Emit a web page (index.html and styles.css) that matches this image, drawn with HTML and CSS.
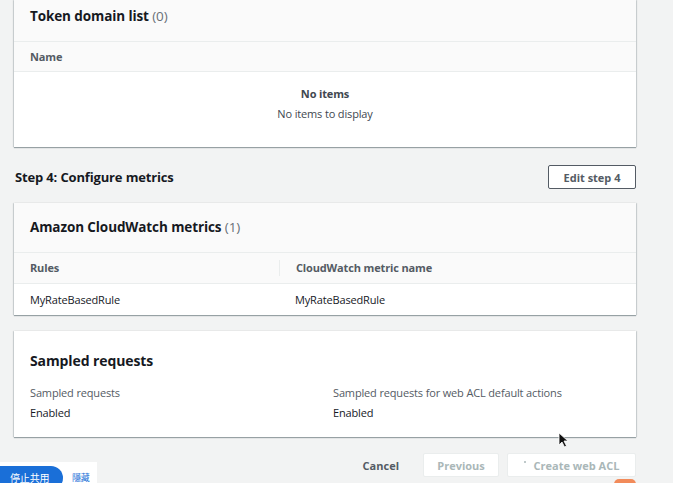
FILE: index.html
```html
<!DOCTYPE html>
<html>
<head>
<meta charset="utf-8">
<link rel="stylesheet" href="styles.css">
</head>
<body>
<main class="page">
  <section class="card card-top">
    <div class="card-header"><h2>Token domain list <span class="count">(0)</span></h2></div>
    <div class="col-head single"><span>Name</span></div>
    <div class="empty">
      <div class="empty-title">No items</div>
      <div class="empty-sub">No items to display</div>
    </div>
  </section>

  <div class="step-row">
    <h1>Step 4: Configure metrics</h1>
    <button class="btn btn-normal">Edit step 4</button>
  </div>

  <section class="card">
    <div class="card-header tall"><h2>Amazon CloudWatch metrics <span class="count">(1)</span></h2></div>
    <div class="col-head two">
      <span class="c1">Rules</span>
      <span class="c2">CloudWatch metric name</span>
    </div>
    <div class="row two">
      <span class="c1">MyRateBasedRule</span>
      <span class="c2">MyRateBasedRule</span>
    </div>
  </section>

  <section class="card card-white">
    <h2 class="plain-title">Sampled requests</h2>
    <div class="kv-grid">
      <div class="kv"><div class="label">Sampled requests</div><div class="value">Enabled</div></div>
      <div class="kv"><div class="label">Sampled requests for web ACL default actions</div><div class="value">Enabled</div></div>
    </div>
  </section>

  <div class="actions">
    <button class="btn btn-link">Cancel</button>
    <button class="btn btn-disabled prev">Previous</button>
    <button class="btn btn-disabled create"><span class="spin"></span>Create web ACL</button>
  </div>
</main>

<div class="share-bar">
  <span class="stop">停止共用</span>
  <span class="hide">隱藏</span>
</div>
<div class="orange-tab"></div>
<svg class="cursor" width="12" height="16" viewBox="0 0 12 16"><path d="M1 1 L1 13 L4 10 L6.5 15 L8.5 14 L6 9 L10 9 Z" fill="#111" stroke="#fff" stroke-width="0.8"/></svg>
</body>
</html>
```

FILE: styles.css
```css
* { box-sizing: border-box; }
html, body { margin: 0; padding: 0; }
body {
  background: #f2f3f3;
  font-family: "Open Sans", "Noto Sans", "Noto Sans CJK TC", sans-serif;
  color: #16191f;
  font-size: 11px;
  letter-spacing: -0.15px;
  line-height: 20px;
  width: 673px;
  height: 483px;
  overflow: hidden;
  position: relative;
}
.page {
  width: 622px;
  margin-left: 14px;
}
.card {
  background: #fff;
  box-shadow: 0 1px 1px 0 rgba(0, 28, 36, 0.35), 1px 0 1px 0 rgba(0, 28, 36, 0.12), -1px 0 1px 0 rgba(0, 28, 36, 0.12);
}
.card-header {
  background: #fafafa;
  padding: 6px 16px 15px;
  border-bottom: 1px solid #eaeded;
}
.card-header.tall { padding: 14px 16px 15px; }
h2 {
  margin: 0;
  font-size: 13.5px;
  font-weight: 700;
  line-height: 20px;
  letter-spacing: -0.1px;
}
.count { font-weight: 400; color: #687078; }
.col-head {
  background: #fafafa;
  border-bottom: 1px solid #eaeded;
  height: 31px;
  font-weight: 700;
  color: #545b64;
  display: grid;
  align-items: center;
}
.col-head.single { padding: 0 16px; height: 30px; }
.two { display: grid; grid-template-columns: 265px 1fr; align-items: center; }
.two .c1 { padding-left: 16px; }
.two .c2 { padding-left: 16px; }
.col-head.two .c2 { border-left: 1px solid #eaeded; line-height: 16px; }
.row { height: 31px; }
.empty {
  text-align: center;
  padding: 12px 0 23px;
  color: #16191f;
}
.empty-title { font-weight: 700; color: #414750; }
.empty-sub { color: #414750; }
.step-row {
  display: flex;
  justify-content: space-between;
  align-items: center;
  margin: 18px 0 14px;
  height: 24px;
}
h1 {
  margin: 0 0 0 1px;
  font-size: 13px;
  font-weight: 700;
  line-height: 20px;
}
.btn {
  font-family: inherit;
  font-size: 11px;
  font-weight: 700;
  height: 24px;
  border-radius: 2px;
  padding: 0 15px;
  cursor: default;
}
.btn-normal {
  background: #fff;
  border: 1px solid #545b64;
  color: #545b64;
  width: 88px;
  padding: 0;
}
.card-white { margin-top: 16px; padding: 20px 16px 14px; }
.plain-title { font-size: 14px; }
.kv-grid {
  display: grid;
  grid-template-columns: 1fr 1fr;
  column-gap: 16px;
  margin-top: 12px;
}
.label { color: #545b64; }
.actions {
  display: flex;
  justify-content: flex-end;
  align-items: center;
  gap: 8px;
  margin-top: 16px;
}
.btn-link {
  background: none;
  border: none;
  color: #545b64;
  padding: 0 16px;
}
.btn-disabled {
  background: #fff;
  border: 1px solid #eaeded;
  color: #aab7b8;
}
.prev { width: 76px; padding: 0; }
.create { width: 129px; padding: 0; display: flex; align-items: center; justify-content: center; gap: 8px; }
.spin { width: 2px; height: 2px; border-radius: 1px; background: #aab7b8; margin-top: -6px; }

.share-bar {
  position: absolute;
  left: 0;
  top: 462px;
  width: 97px;
  height: 30px;
  background: #fff;
  display: flex;
  align-items: flex-start;
  gap: 9px;
  padding-top: 4px;
}
.stop {
  background: #1a6fd8;
  color: #fff;
  font-size: 10px;
  line-height: 20px;
  height: 24px;
  padding: 2px 6px 0 10px;
  border-radius: 0 14px 14px 0;
  width: 63px;
  font-family: "Noto Sans CJK TC", sans-serif;
}
.hide {
  color: #1a6fd8;
  font-size: 9px;
  line-height: 20px;
  padding-top: 2px;
  font-family: "Noto Sans CJK TC", sans-serif;
}
.orange-tab {
  position: absolute;
  left: 614px;
  top: 479px;
  width: 22px;
  height: 10px;
  background: #f28b5a;
  border-radius: 5px 5px 0 0;
}
.cursor {
  position: absolute;
  left: 558px;
  top: 432px;
}
```
